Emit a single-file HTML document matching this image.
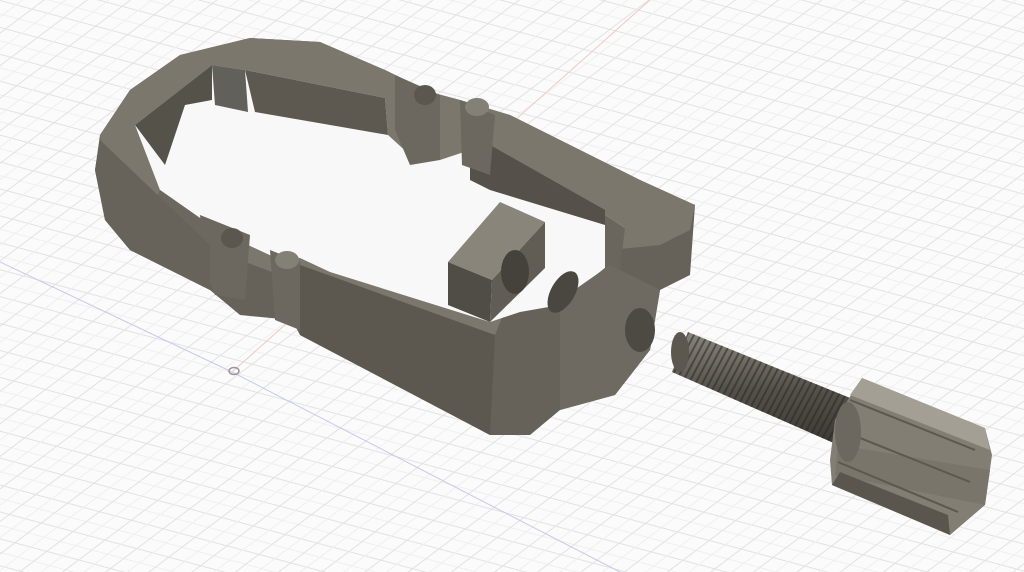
<!DOCTYPE html>
<html><head><meta charset="utf-8"><style>
html,body{margin:0;padding:0;background:#fbfbfb;overflow:hidden}
svg{display:block}
</style></head><body>
<svg width="1024" height="572" viewBox="0 0 1024 572" xmlns="http://www.w3.org/2000/svg">
<defs>
<pattern id="ga" width="2000" height="26" patternUnits="userSpaceOnUse" patternTransform="rotate(15)">
<line x1="0" y1="0.5" x2="2000" y2="0.5" stroke="#e2e2e2" stroke-width="1"/>
<line x1="0" y1="13.5" x2="2000" y2="13.5" stroke="#efefef" stroke-width="1"/>
</pattern>
<pattern id="gb" width="26" height="2000" patternUnits="userSpaceOnUse" patternTransform="rotate(53)">
<line x1="0.5" y1="0" x2="0.5" y2="2000" stroke="#e2e2e2" stroke-width="1"/>
<line x1="13.5" y1="0" x2="13.5" y2="2000" stroke="#efefef" stroke-width="1"/>
</pattern>
<linearGradient id="scr" x1="0" y1="0" x2="0" y2="1">
<stop offset="0" stop-color="#8a857c"/><stop offset="0.5" stop-color="#55514a"/><stop offset="1" stop-color="#3a3833"/>
</linearGradient>
<pattern id="thr" width="6" height="60" patternUnits="userSpaceOnUse" patternTransform="rotate(28)">
<line x1="2" y1="0" x2="2" y2="60" stroke="#2a2825" stroke-width="2"/>
</pattern>
</defs>
<rect width="1024" height="572" fill="#fbfbfb"/>
<rect width="1024" height="572" fill="url(#ga)"/>
<rect width="1024" height="572" fill="url(#gb)"/>
<line x1="650" y1="0" x2="232" y2="372" stroke="#f0c8c8" stroke-width="1"/>
<line x1="0" y1="262" x2="232" y2="372" stroke="#c8c8ee" stroke-width="1"/>
<line x1="232" y1="372" x2="620" y2="572" stroke="#c8c8ee" stroke-width="1"/>
<ellipse cx="234" cy="371" rx="5" ry="3.5" fill="none" stroke="#999" stroke-width="1.5"/>

<!-- frame side faces -->
<polygon points="100,135 130,90 180,55 250,38 320,42 385,70 430,92 460,100 510,115 640,180 695,205 690,275 660,290 650,350 615,395 560,410 530,435 490,435 300,335 292,320 240,315 210,290 130,250 105,220 95,170" fill="#66625a"/>
<!-- top face -->
<polygon points="100,135 130,90 180,55 250,38 320,42 385,70 430,92 460,100 510,115 640,180 695,205 690,230 660,245 610,250 575,280 540,300 505,310 495,335 480,330 300,265 280,275 240,260 210,245 140,205 105,170" fill="#7c776d"/>
<!-- inner hole -->
<polygon points="135,125 212,65 245,70 385,98 388,135 410,155 440,160 470,150 605,215 625,228 612,262 560,305 520,312 490,322 330,272 300,258 276,258 220,232 160,190" fill="#f8f8f8"/>
<!-- inner walls -->
<polygon points="135,125 212,65 212,100 185,105 165,165" fill="#55524a"/>
<polygon points="212,65 245,70 248,112 215,105" fill="#62605a"/>
<polygon points="245,70 385,98 388,135 255,112" fill="#5d5951"/>
<polygon points="470,150 490,145 605,210 605,225 490,190 470,180" fill="#55514a"/>
<polygon points="605,215 625,228 620,270 605,268" fill="#6a665e"/>
<polygon points="160,190 220,232 210,250 150,210" fill="#6d685f"/>
<!-- slots -->
<polygon points="395,75 440,95 440,160 410,165 395,130" fill="#6c685f"/>
<ellipse cx="425" cy="95" rx="11" ry="10" fill="#5b574f"/>
<polygon points="460,100 495,115 490,175 462,165" fill="#6c685f"/>
<ellipse cx="477" cy="107" rx="12" ry="9" fill="#838076"/>
<polygon points="200,215 250,235 245,300 215,295 205,270" fill="#6c685f"/>
<ellipse cx="232" cy="238" rx="11" ry="10" fill="#5b574f"/>
<polygon points="270,250 300,262 300,330 275,320" fill="#6c685f"/>
<ellipse cx="287" cy="260" rx="12" ry="9" fill="#838076"/>
<!-- front outer side shading -->
<polygon points="300,265 495,335 490,435 300,335" fill="#5c5850"/>
<polygon points="100,140 210,245 210,290 130,250 105,220 95,170" fill="#67635a"/>
<polygon points="560,300 610,265 660,290 650,350 615,395 560,410" fill="#6e6a61"/>
<!-- nut -->
<polygon points="448,262 500,202 545,222 492,280" fill="#8a857b"/>
<polygon points="448,262 492,280 490,322 448,305" fill="#504d46"/>
<polygon points="492,280 545,222 545,268 490,322" fill="#615d55"/>
<ellipse cx="515" cy="272" rx="14" ry="22" fill="#45423c"/>
<!-- disk -->
<ellipse cx="563" cy="292" rx="12" ry="23" transform="rotate(30 563 292)" fill="#4a4741"/>
<!-- threaded hole -->
<ellipse cx="640" cy="330" rx="15" ry="22" fill="#4d4a43"/>
<!-- screw -->
<polygon points="688,332 860,402 845,448 672,372" fill="url(#scr)"/>
<polygon points="688,332 860,402 845,448 672,372" fill="url(#thr)" opacity="0.55"/>
<ellipse cx="680" cy="352" rx="9" ry="20" fill="#5c5850"/>
<!-- knob -->
<polygon points="862,378 985,428 992,455 985,505 950,535 832,485 830,460 835,420" fill="#837e74"/>
<polygon points="862,378 985,428 990,450 850,395" fill="#a39f95"/>
<polygon points="838,445 990,470 985,505 835,475" fill="#7a756b"/>
<g stroke="#5c5850" stroke-width="2">
<line x1="850" y1="400" x2="975" y2="450"/>
<line x1="840" y1="430" x2="970" y2="482"/>
<line x1="838" y1="462" x2="958" y2="512"/>
</g>
<polygon points="832,485 950,535 948,515 840,472" fill="#5a564e"/>
<ellipse cx="848" cy="432" rx="13" ry="30" fill="#6c685f"/>
</svg>
</body></html>
